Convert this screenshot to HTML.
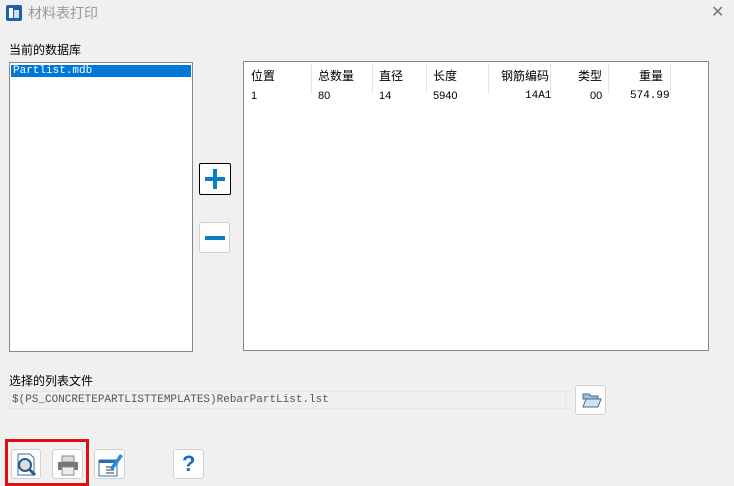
<!DOCTYPE html><html><head><meta charset="utf-8"><style>
body{margin:0;width:734px;height:486px;background:#f0f0f0;position:relative;overflow:hidden;font-family:"Liberation Sans","Noto Sans CJK SC",sans-serif;font-size:12px;color:#000}
.a{position:absolute}
.btn{position:absolute;background:#fdfdfd;border:1px solid #d0d0d0;border-radius:3px;box-sizing:border-box}
.h{position:absolute;top:4px;height:28px;line-height:20px}
.sep{position:absolute;top:2px;width:1px;height:30px;background:#e5e5e5}
.r{position:absolute;top:28px;font-size:11px}
</style></head><body>
<div class="a" style="left:6px;top:5px;width:16px;height:16px;background:#1d5fa8;border-radius:2px"></div>
<div class="a" style="left:9px;top:8px;width:4px;height:10px;background:#fff"></div><div class="a" style="left:14px;top:10px;width:5px;height:8px;background:#cfe0f3"></div>
<div class="a" style="left:28px;top:3px;font-size:14px;color:#999">材料表打印</div>
<div class="a" style="left:711px;top:2px;font-size:16px;color:#777">✕</div>
<div class="a" style="left:9px;top:41px">当前的数据库</div>
<div class="a" style="left:9px;top:62px;width:184px;height:290px;background:#fff;border:1px solid #828790;box-sizing:border-box">
<div style="margin:2px 1px;background:#0078d7;color:#fff;font-family:'Liberation Mono',monospace;font-size:11px;height:12px;line-height:12px;padding-left:2px">Partlist.mdb</div></div>
<div class="btn" style="left:199px;top:163px;width:32px;height:32px;border:1px solid #000;border-radius:2px"><div class="a" style="left:5px;top:13px;width:20px;height:4px;background:#0a7ec2"></div><div class="a" style="left:13px;top:5px;width:4px;height:20px;background:#0a7ec2"></div></div>
<div class="btn" style="left:199px;top:222px;width:31px;height:31px"><div class="a" style="left:5px;top:13px;width:20px;height:4px;background:#0a7ec2"></div></div>
<div class="a" style="left:243px;top:61px;width:466px;height:290px;background:#fff;border:1px solid #828790;box-sizing:border-box">
<div class="h" style="left:7px">位置</div><div class="sep" style="left:67px"></div>
<div class="h" style="left:74px">总数量</div><div class="sep" style="left:128px"></div>
<div class="h" style="left:135px">直径</div><div class="sep" style="left:182px"></div>
<div class="h" style="left:189px">长度</div><div class="sep" style="left:244px"></div>
<div class="h" style="left:257px">钢筋编码</div><div class="sep" style="left:306px"></div>
<div class="h" style="left:334px">类型</div><div class="sep" style="left:364px"></div>
<div class="h" style="left:395px">重量</div><div class="sep" style="left:426px"></div>
<div class="r" style="left:7px">1</div><div class="r" style="left:74px">80</div><div class="r" style="left:135px">14</div><div class="r" style="left:189px">5940</div>
<div class="r" style="left:281px;font-family:'Liberation Mono',monospace">14A1</div><div class="r" style="left:346px">00</div><div class="r" style="left:386px;font-family:'Liberation Mono',monospace">574.99</div>
</div>
<div class="a" style="left:9px;top:372px">选择的列表文件</div>
<div class="a" style="left:9px;top:391px;width:557px;height:18px;border:1px solid #e6e6e6;box-sizing:border-box;font-family:'Liberation Mono',monospace;font-size:11px;color:#555;line-height:16px;padding-left:2px">$(PS_CONCRETEPARTLISTTEMPLATES)RebarPartList.lst</div>
<div class="btn" style="left:575px;top:385px;width:31px;height:30px"><svg class="a" style="left:6px;top:6px" width="20" height="17"><path d="M1 2h6l2 2h7v3H1z" fill="#9dbccc" stroke="#3d6fa0"/><path d="M1 15L4 7h15l-3 8z" fill="#cfe2ea" stroke="#3d6fa0"/></svg></div>
<div class="a" style="left:5px;top:439px;width:84px;height:47px;border:3px solid #e01010;box-sizing:border-box"></div>
<div class="btn" style="left:11px;top:449px;width:30px;height:30px"><svg class="a" style="left:3px;top:3px" width="24" height="24"><path d="M3 1h12l4 4v17H3z" fill="#fff" stroke="#3d6fa0"/><circle cx="10" cy="12" r="6" fill="#ddd" stroke="#2a5b8a" stroke-width="2"/><path d="M14 16l6 6" stroke="#2a5b8a" stroke-width="3"/></svg></div>
<div class="btn" style="left:52px;top:449px;width:31px;height:30px"><svg class="a" style="left:4px;top:4px" width="22" height="22"><rect x="5" y="2" width="12" height="6" fill="#ddd" stroke="#888"/><rect x="1" y="8" width="20" height="8" fill="#777"/><rect x="5" y="13" width="12" height="8" fill="#eee" stroke="#888"/></svg></div>
<div class="btn" style="left:94px;top:449px;width:31px;height:30px"><svg class="a" style="left:3px;top:2px" width="26" height="26"><rect x="1" y="8" width="18" height="16" fill="#fff" stroke="#2a6db0"/><rect x="1" y="8" width="18" height="3" fill="#2a6db0"/><path d="M8 15h8M8 18h8M8 21h8" stroke="#333"/><path d="M12 16L22 2l3 2-10 14z" fill="#2a8ae0"/></svg></div>
<div class="btn" style="left:173px;top:449px;width:31px;height:30px"><div class="a" style="left:8px;top:1px;font-size:22px;font-weight:bold;color:#1a6fc0">?</div></div>
</body></html>
